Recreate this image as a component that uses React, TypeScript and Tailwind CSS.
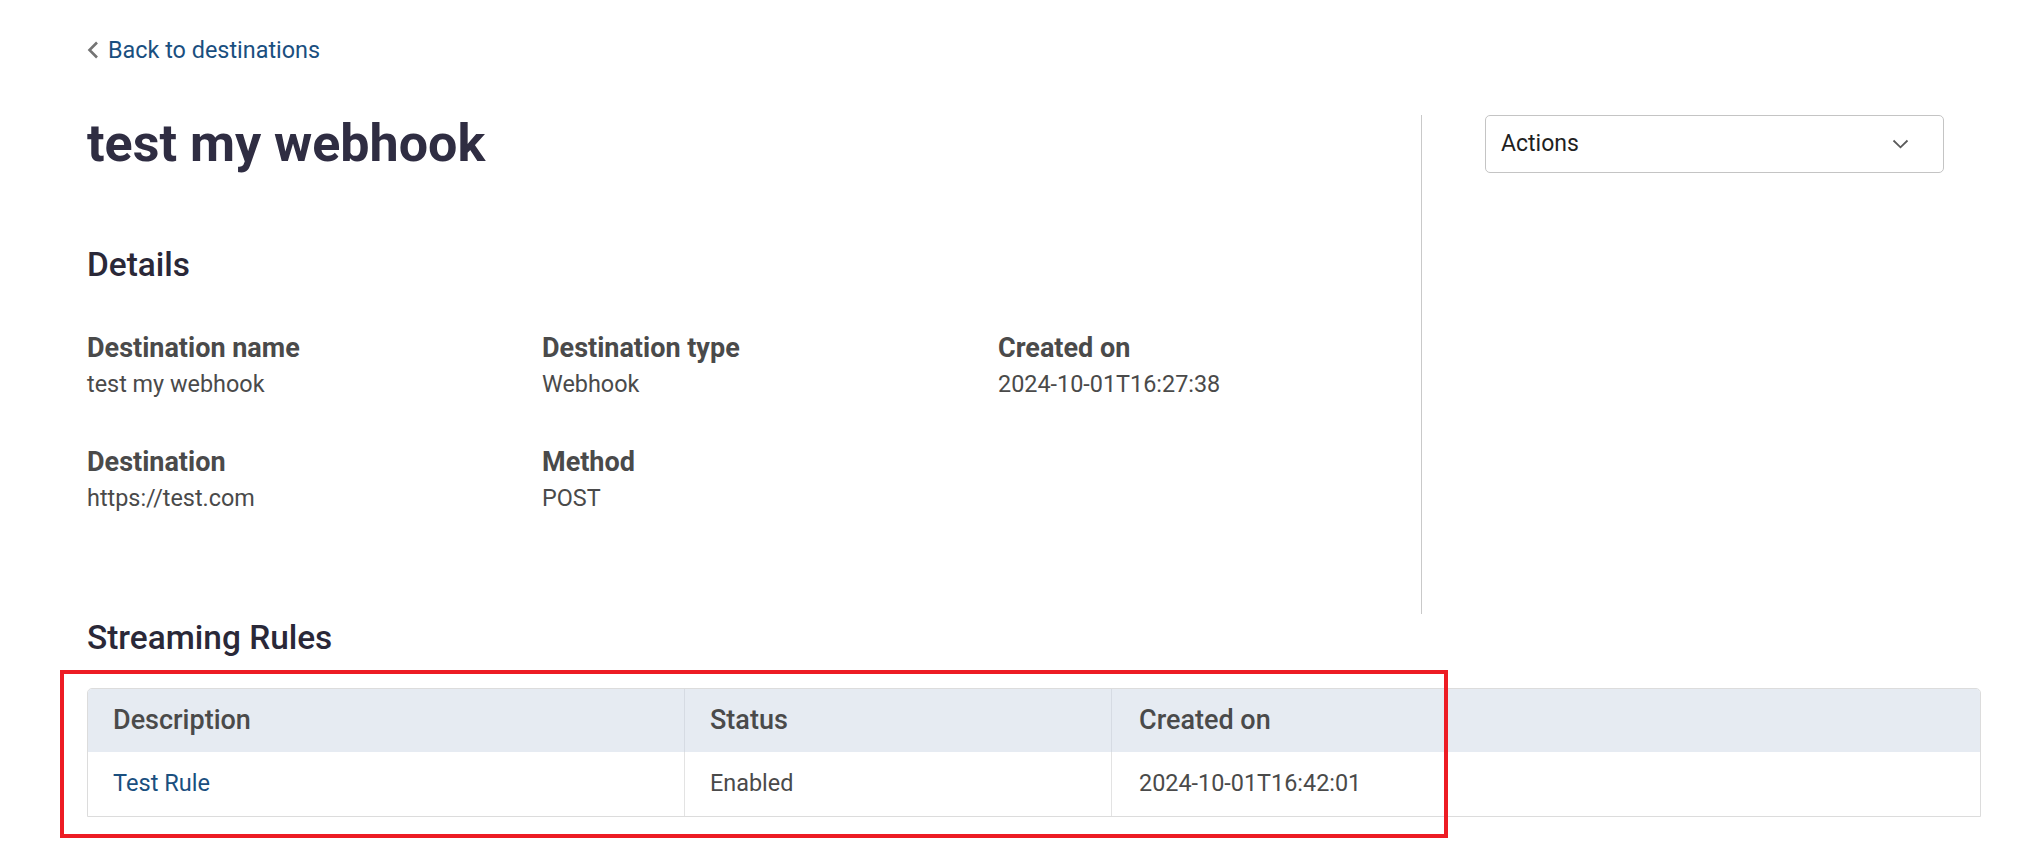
import React from "react";

const font = { fontFamily: "Roboto, 'Noto Sans', sans-serif" };

export default function App() {
  return (
    <div className="relative min-h-screen bg-white" style={font}>
      <div className="pl-[87px] pr-[62px] pt-[36px]">
        <a href="#" className="flex h-[28px] items-center gap-[9px] text-[23.4px] leading-[28px] text-[#1a4f7f] no-underline">
          <svg width="12" height="18" viewBox="0 0 12 18" className="ml-[0px]">
            <polyline points="10,1.5 2.5,9 10,16.5" fill="none" stroke="#747474" strokeWidth="2.6" />
          </svg>
          <span>Back to destinations</span>
        </a>

        <div className="mt-[45px] flex">
          <div className="w-[1334px]">
            <h1 className="mt-[5px] h-[60px] text-[52px] font-bold leading-[60px] text-[#2f2d42]">test my webhook</h1>
            <h2 className="mt-[71px] text-[33.4px] font-medium leading-[40px] text-[#2a2838]">Details</h2>
            <div className="mt-[47px] grid grid-cols-[455px_456px_1fr] gap-y-[48px]">
              <Field label="Destination name" value="test my webhook" />
              <Field label="Destination type" value="Webhook" />
              <Field label="Created on" value="2024-10-01T16:27:38" />
              <Field label="Destination" value="https://test.com" />
              <Field label="Method" value="POST" />
            </div>
          </div>
          <div className="mt-[6px] h-[499px] w-px bg-[#c9c9c9]" />
          <div className="ml-[63px] mt-[6px]">
            <div className="flex h-[58px] w-[459px] items-center justify-between rounded-[5px] border border-[#c4c4c4] pl-[15px] pr-[34px]">
              <span className="text-[23px] text-[#1f1f1f]">Actions</span>
              <svg width="17" height="10" viewBox="0 0 17 10">
                <polyline points="1.5,1.5 8.5,8.3 15.5,1.5" fill="none" stroke="#5a5a5a" strokeWidth="1.8" />
              </svg>
            </div>
          </div>
        </div>

        <h2 className="mt-[4px] text-[33.4px] font-medium leading-[40px] text-[#2a2838]">Streaming Rules</h2>

        <div className="mt-[30px] overflow-hidden rounded-t-[5px] border border-[#dcdcdc]">
          <div className="grid h-[63px] grid-cols-[597px_427px_1fr] bg-[#e6ebf2]">
            <div className="flex items-center border-r border-[#d6dbe3] pl-[25px] text-[27px] font-medium text-[#4a4a4a]">Description</div>
            <div className="flex items-center border-r border-[#d6dbe3] pl-[25px] text-[27px] font-medium text-[#4a4a4a]">Status</div>
            <div className="flex items-center pl-[27px] text-[27px] font-medium text-[#4a4a4a]">Created on</div>
          </div>
          <div className="grid h-[64px] grid-cols-[597px_427px_1fr] bg-white">
            <div className="flex items-center border-r border-[#e3e3e3] pl-[25px] text-[23.6px] text-[#1a4f7f]">Test Rule</div>
            <div className="flex items-center border-r border-[#e3e3e3] pl-[25px] text-[23.4px] text-[#4a4a4a]">Enabled</div>
            <div className="flex items-center pl-[27px] text-[23.4px] text-[#4a4a4a]">2024-10-01T16:42:01</div>
          </div>
        </div>
      </div>

      <div className="pointer-events-none absolute left-[60px] top-[670px] h-[168px] w-[1388px] border-[4px] border-[#ed1c24]" />
    </div>
  );
}

function Field({ label, value }: { label: string; value: string }) {
  return (
    <div>
      <div className="text-[27px] font-bold leading-[32px] text-[#4a4a4a]">{label}</div>
      <div className="mt-[6px] text-[23.4px] leading-[28px] text-[#4a4a4a]">{value}</div>
    </div>
  );
}
